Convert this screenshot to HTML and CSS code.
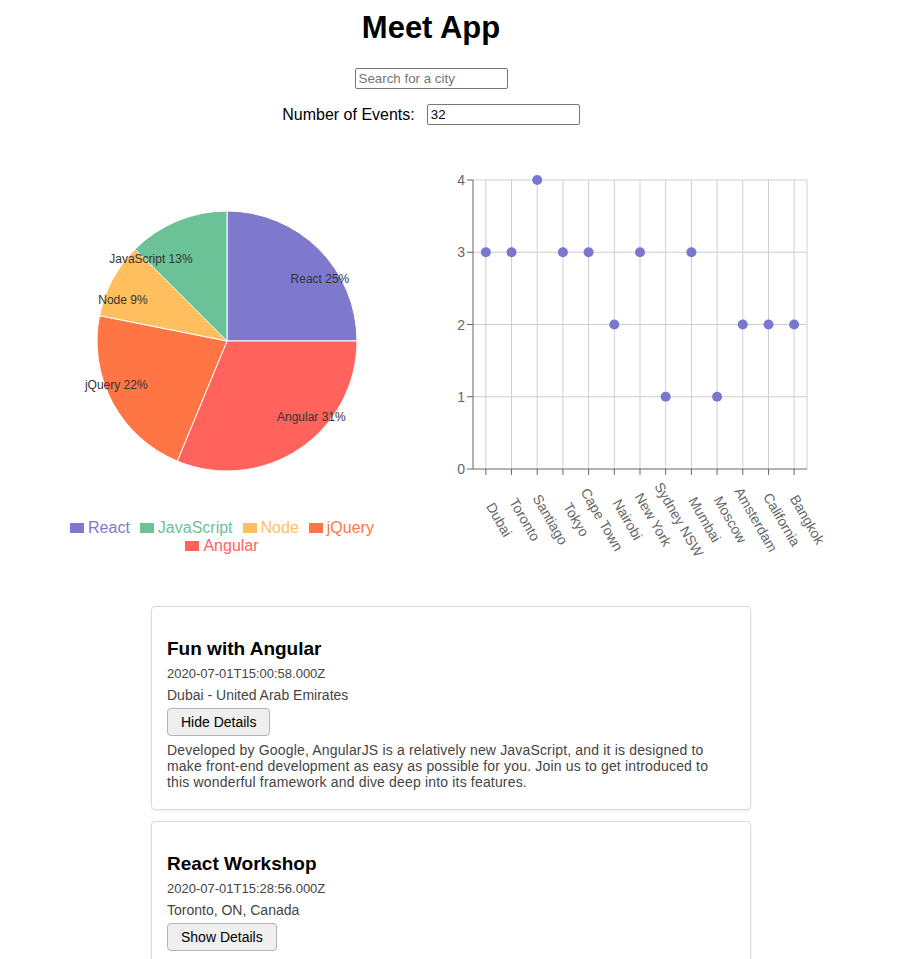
FILE: index.html
```html
<!DOCTYPE html>
<html>
<head>
	<meta charset="utf-8">
	<meta name="viewport" content="width=device-width, initial-scale=1">
	<title>Meet App</title>
	<link rel="stylesheet" href="styles.css">
</head>
<body>
	<div class="App">
		<div class="top">
			<h1 class="title">Meet App</h1>
			<div class="CitySearch">
				<input type="text" class="city" placeholder="Search for a city">
			</div>
			<div class="NumberOfEvents">
				<label class="events-label">Number of Events:</label>
				<input type="text" class="events-number" value="32">
			</div>
		</div>

		<div class="data-vis">
			<div class="pie-wrap">
				<svg class="pie" width="450" height="360" viewBox="0 0 450 360">
					<g transform="translate(0,-150)">
						<path class="slice" fill="#7e79cc" d="M227,341 L227,211 A130,130 0 0 1 357,341 Z"/>
						<path class="slice" fill="#ff635b" d="M227,341 L357,341 A130,130 0 0 1 177.25,461.1 Z"/>
						<path class="slice" fill="#ff7644" d="M227,341 L177.25,461.1 A130,130 0 0 1 99.5,315.64 Z"/>
						<path class="slice" fill="#ffbf5e" d="M227,341 L99.5,315.64 A130,130 0 0 1 135.08,249.08 Z"/>
						<path class="slice" fill="#6cc297" d="M227,341 L135.08,249.08 A130,130 0 0 1 227,211 Z"/>

						<text class="pie-label" x="290.6" y="278.6">React 25%</text>
						<text class="pie-label" x="277" y="417">Angular 31%</text>
						<text class="pie-label end" x="147.6" y="384.6">jQuery 22%</text>
						<text class="pie-label end" x="147.6" y="299.8">Node 9%</text>
						<text class="pie-label end" x="192.6" y="259">JavaScript 13%</text>
					</g>
				</svg>
				<ul class="legend">
					<li class="react"><span class="icon"></span>React</li>
					<li class="js"><span class="icon"></span>JavaScript</li>
					<li class="node"><span class="icon"></span>Node</li>
					<li class="jquery"><span class="icon"></span>jQuery</li>
					<li class="angular"><span class="icon"></span>Angular</li>
				</ul>
			</div>

			<svg class="scatter" width="440" height="420" viewBox="0 0 440 420">
				<g transform="translate(-450,-150)">
					<!-- grid -->
					<g class="grid">
						<line x1="473" y1="180" x2="807" y2="180"/>
						<line x1="473" y1="252.25" x2="807" y2="252.25"/>
						<line x1="473" y1="324.5" x2="807" y2="324.5"/>
						<line x1="473" y1="396.75" x2="807" y2="396.75"/>
						<line x1="485.85" y1="180" x2="485.85" y2="469"/>
						<line x1="511.5" y1="180" x2="511.5" y2="469"/>
						<line x1="537.2" y1="180" x2="537.2" y2="469"/>
						<line x1="562.9" y1="180" x2="562.9" y2="469"/>
						<line x1="588.6" y1="180" x2="588.6" y2="469"/>
						<line x1="614.3" y1="180" x2="614.3" y2="469"/>
						<line x1="640" y1="180" x2="640" y2="469"/>
						<line x1="665.7" y1="180" x2="665.7" y2="469"/>
						<line x1="691.4" y1="180" x2="691.4" y2="469"/>
						<line x1="717.1" y1="180" x2="717.1" y2="469"/>
						<line x1="742.8" y1="180" x2="742.8" y2="469"/>
						<line x1="768.5" y1="180" x2="768.5" y2="469"/>
						<line x1="794.1" y1="180" x2="794.1" y2="469"/>
						<line x1="807" y1="180" x2="807" y2="469"/>
					</g>

					<!-- y axis -->
					<g class="axis">
						<line x1="473" y1="180" x2="473" y2="469"/>
						<line x1="467" y1="180" x2="473" y2="180"/>
						<line x1="467" y1="252.25" x2="473" y2="252.25"/>
						<line x1="467" y1="324.5" x2="473" y2="324.5"/>
						<line x1="467" y1="396.75" x2="473" y2="396.75"/>
						<line x1="467" y1="469" x2="473" y2="469"/>
					</g>
					<text class="tick y-tick" x="465" y="180">4</text>
					<text class="tick y-tick" x="465" y="252.25">3</text>
					<text class="tick y-tick" x="465" y="324.5">2</text>
					<text class="tick y-tick" x="465" y="396.75">1</text>
					<text class="tick y-tick" x="465" y="469">0</text>

					<!-- x axis -->
					<g class="axis">
						<line x1="473" y1="469" x2="807" y2="469"/>
						<line x1="485.85" y1="469" x2="485.85" y2="475"/>
						<line x1="511.5" y1="469" x2="511.5" y2="475"/>
						<line x1="537.2" y1="469" x2="537.2" y2="475"/>
						<line x1="562.9" y1="469" x2="562.9" y2="475"/>
						<line x1="588.6" y1="469" x2="588.6" y2="475"/>
						<line x1="614.3" y1="469" x2="614.3" y2="475"/>
						<line x1="640" y1="469" x2="640" y2="475"/>
						<line x1="665.7" y1="469" x2="665.7" y2="475"/>
						<line x1="691.4" y1="469" x2="691.4" y2="475"/>
						<line x1="717.1" y1="469" x2="717.1" y2="475"/>
						<line x1="742.8" y1="469" x2="742.8" y2="475"/>
						<line x1="768.5" y1="469" x2="768.5" y2="475"/>
						<line x1="794.1" y1="469" x2="794.1" y2="475"/>
					</g>
					<text class="tick x-tick" x="494.9" y="522" transform="rotate(60 494.9 522)">Dubai</text>
					<text class="tick x-tick" x="520.5" y="522" transform="rotate(60 520.5 522)">Toronto</text>
					<text class="tick x-tick" x="546.2" y="522" transform="rotate(60 546.2 522)">Santiago</text>
					<text class="tick x-tick" x="571.9" y="522" transform="rotate(60 571.9 522)">Tokyo</text>
					<text class="tick x-tick" x="597.6" y="522" transform="rotate(60 597.6 522)">Cape Town</text>
					<text class="tick x-tick" x="623.3" y="522" transform="rotate(60 623.3 522)">Nairobi</text>
					<text class="tick x-tick" x="649" y="522" transform="rotate(60 649 522)">New York</text>
					<text class="tick x-tick" x="674.7" y="522" transform="rotate(60 674.7 522)">Sydney NSW</text>
					<text class="tick x-tick" x="700.4" y="522" transform="rotate(60 700.4 522)">Mumbai</text>
					<text class="tick x-tick" x="726.1" y="522" transform="rotate(60 726.1 522)">Moscow</text>
					<text class="tick x-tick" x="751.8" y="522" transform="rotate(60 751.8 522)">Amsterdam</text>
					<text class="tick x-tick" x="777.5" y="522" transform="rotate(60 777.5 522)">California</text>
					<text class="tick x-tick" x="803.1" y="522" transform="rotate(60 803.1 522)">Bangkok</text>

					<!-- points -->
					<g class="dots">
						<circle cx="485.85" cy="252.25" r="5"/>
						<circle cx="511.5" cy="252.25" r="5"/>
						<circle cx="537.2" cy="180" r="5"/>
						<circle cx="562.9" cy="252.25" r="5"/>
						<circle cx="588.6" cy="252.25" r="5"/>
						<circle cx="614.3" cy="324.5" r="5"/>
						<circle cx="640" cy="252.25" r="5"/>
						<circle cx="665.7" cy="396.75" r="5"/>
						<circle cx="691.4" cy="252.25" r="5"/>
						<circle cx="717.1" cy="396.75" r="5"/>
						<circle cx="742.8" cy="324.5" r="5"/>
						<circle cx="768.5" cy="324.5" r="5"/>
						<circle cx="794.1" cy="324.5" r="5"/>
					</g>
				</g>
			</svg>
		</div>

		<ul class="EventList">
			<li class="event">
				<h2 class="name">Fun with Angular</h2>
				<p class="start-time">2020-07-01T15:00:58.000Z</p>
				<p class="location">Dubai - United Arab Emirates</p>
				<button type="button" class="details-btn">Hide Details</button>
				<p class="description">Developed by Google, AngularJS is a relatively new JavaScript, and it is designed to make front-end development as easy as possible for you. Join us to get introduced to this wonderful framework and dive deep into its features.</p>
			</li>
			<li class="event">
				<h2 class="name">React Workshop</h2>
				<p class="start-time">2020-07-01T15:28:56.000Z</p>
				<p class="location">Toronto, ON, Canada</p>
				<button type="button" class="details-btn">Show Details</button>
			</li>
		</ul>
	</div>
</body>
</html>
```

FILE: styles.css
```css
body {
	margin: 0;
	font-family: "Liberation Sans", Arial, sans-serif;
	color: #000;
	background: #fff;
}
.App {
	padding-top: 10px;
}
.top {
	width: 862px;
	text-align: center;
}
.title {
	margin: 0;
	font-size: 31px;
	line-height: 36px;
	font-weight: bold;
}
.CitySearch {
	margin-top: 22px;
	height: 21px;
}
.NumberOfEvents {
	margin-top: 15px;
	display: flex;
	justify-content: center;
	align-items: center;
	gap: 12px;
	height: 21px;
}
.events-label {
	font-size: 16px;
	line-height: 21px;
}
.city,
.events-number {
	box-sizing: border-box;
	width: 153px;
	height: 21px;
	margin: 0;
	padding: 1px 3px;
	border: 1px solid #767676;
	border-radius: 2px;
	font-family: "Liberation Sans", Arial, sans-serif;
	font-size: 13.33px;
	color: #000;
	background: #fff;
	vertical-align: top;
}
.city::placeholder {
	color: #757575;
}

.data-vis {
	margin-top: 25px;
	display: flex;
	align-items: flex-start;
}
.pie-wrap {
	width: 450px;
}
.pie {
	display: block;
}
.slice {
	stroke: #fff;
	stroke-width: 1;
}
.pie-label {
	font-family: "Liberation Sans", Arial, sans-serif;
	font-size: 12px;
	fill: #333;
	dominant-baseline: central;
}
.pie-label.end {
	text-anchor: end;
}
.legend {
	list-style: none;
	width: 354px;
	margin: 9px 0 0 50px;
	padding: 0;
	display: flex;
	flex-wrap: wrap;
	justify-content: center;
}
.legend li {
	display: flex;
	align-items: center;
	margin-right: 10px;
	font-size: 16px;
	line-height: 18px;
}
.legend .icon {
	display: inline-block;
	width: 14px;
	height: 10px;
	margin-right: 4px;
	background: currentColor;
}
.legend .react { color: #7e79cc; }
.legend .js { color: #6cc297; }
.legend .node { color: #ffbf5e; }
.legend .jquery { color: #ff7644; }
.legend .angular { color: #ff635b; }

.scatter {
	display: block;
}
.grid line {
	stroke: #cfcfcf;
	stroke-width: 1;
}
.axis line {
	stroke: #666;
	stroke-width: 1;
}
.tick {
	font-family: "Liberation Sans", Arial, sans-serif;
	font-size: 14px;
	fill: #666;
}
.y-tick {
	text-anchor: end;
	dominant-baseline: central;
}
.x-tick {
	text-anchor: middle;
}
.dots circle {
	fill: #7b77d0;
}

.EventList {
	list-style: none;
	width: 600px;
	margin: 36px 0 0 151px;
	padding: 0;
}
.event {
	box-sizing: border-box;
	padding: 12px 30px 19px 15px;
	margin-bottom: 11px;
	border: 1px solid #dadada;
	border-radius: 4px;
	box-shadow: 0 1px 3px rgba(0, 0, 0, 0.08);
}
.name {
	margin: 19px 0 3px;
	font-size: 19px;
	line-height: 22px;
	font-weight: bold;
}
.start-time {
	margin: 0;
	font-size: 13px;
	line-height: 21px;
	color: #444;
}
.location {
	margin: 0;
	font-size: 14px;
	line-height: 22px;
	color: #444;
}
.details-btn {
	display: block;
	margin-top: 2px;
	height: 28px;
	padding: 0 13px;
	font-family: "Liberation Sans", Arial, sans-serif;
	font-size: 14px;
	color: #000;
	background: #efefef;
	border: 1px solid #b3b3b3;
	border-radius: 4px;
}
.description {
	margin: 6px 0 0;
	font-size: 14px;
	line-height: 16px;
	letter-spacing: 0.17px;
	color: #444;
}
```
